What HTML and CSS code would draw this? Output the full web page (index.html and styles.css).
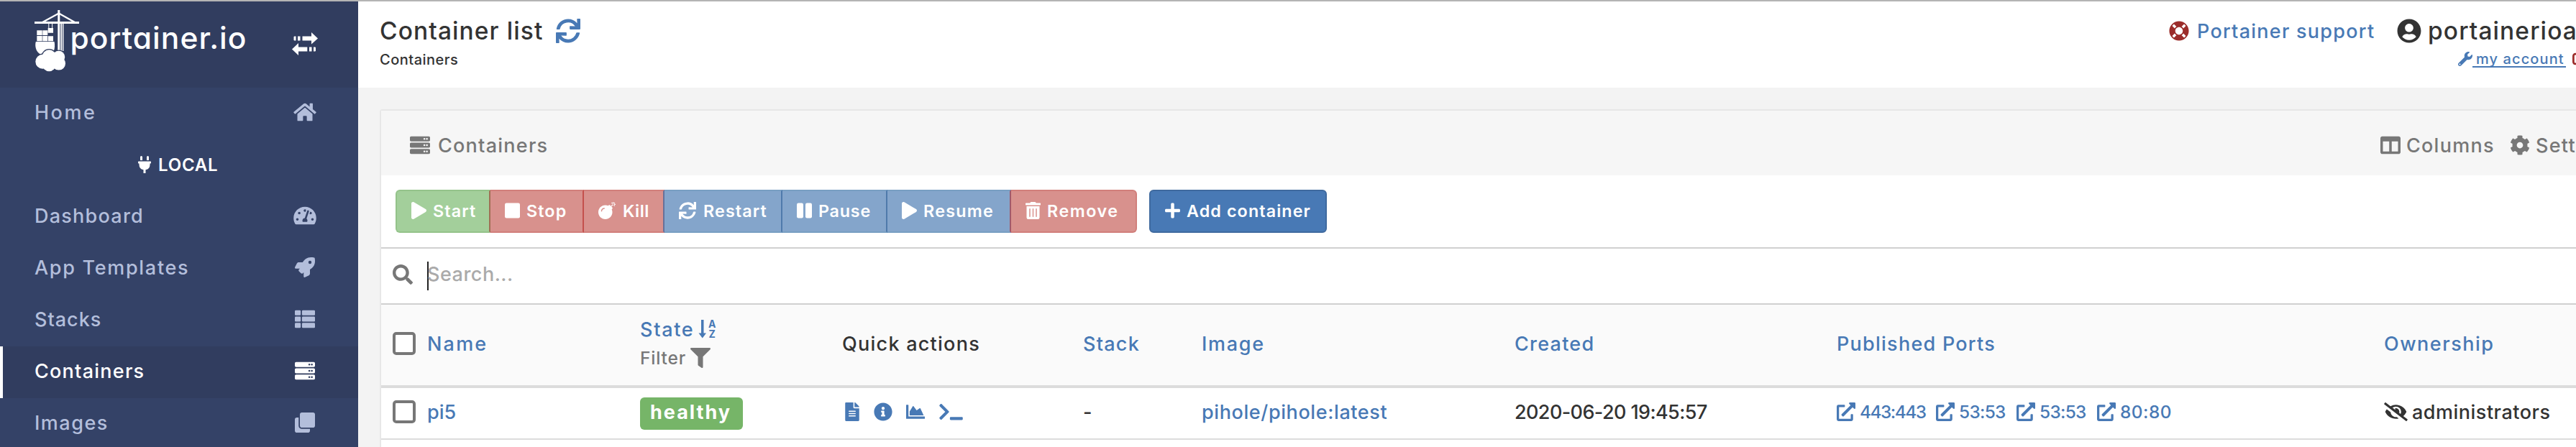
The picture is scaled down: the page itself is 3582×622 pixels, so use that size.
FILE: index.html
```html
<!DOCTYPE html>
<html lang="en">
<head>
<meta charset="utf-8">
<title>Portainer</title>
<link rel="stylesheet" href="styles.css">
</head>
<body>
<svg class="sprite" aria-hidden="true">
<symbol id="home" viewBox="0 0 576 512"><path d="M280.37 148.26L96 300.11V464a16 16 0 0 0 16 16l112.06-.29a16 16 0 0 0 15.92-16V368a16 16 0 0 1 16-16h64a16 16 0 0 1 16 16v95.64a16 16 0 0 0 16 16.05L464 480a16 16 0 0 0 16-16V300L295.67 148.26a12.19 12.19 0 0 0-15.3 0zM571.6 251.47L488 182.56V44.05a12 12 0 0 0-12-12h-56a12 12 0 0 0-12 12v72.61L318.47 43a48 48 0 0 0-61 0L4.34 251.47a12 12 0 0 0-1.6 16.9l25.5 31A12 12 0 0 0 45.15 301l235.22-193.74a12.19 12.19 0 0 1 15.3 0L530.9 301a12 12 0 0 0 16.9-1.6l25.5-31a12 12 0 0 0-1.7-16.93z"/></symbol>
<symbol id="plug" viewBox="0 0 384 512"><path d="M320,32a32,32,0,0,0-64,0v96h64Zm48,128H16A16,16,0,0,0,0,176v32a16,16,0,0,0,16,16H32v32A160.07,160.07,0,0,0,160,412.8V512h64V412.8A160.07,160.07,0,0,0,352,256V224h16a16,16,0,0,0,16-16V176A16,16,0,0,0,368,160ZM128,32a32,32,0,0,0-64,0v96h64Z"/></symbol>
<symbol id="tachometer" viewBox="0 0 576 512"><path d="M288 32C128.94 32 0 160.94 0 320c0 52.8 14.25 102.26 39.06 144.8 5.61 9.62 16.3 15.2 27.44 15.2h443c11.14 0 21.83-5.58 27.44-15.2C561.75 422.26 576 372.8 576 320c0-159.06-128.94-288-288-288zm0 64c14.71 0 26.58 10.13 30.32 23.65-1.11 2.26-2.64 4.23-3.45 6.67l-9.22 27.67c-5.13 3.49-10.97 6.01-17.64 6.01-17.67 0-32-14.33-32-32S270.33 96 288 96zM96 384c-17.67 0-32-14.33-32-32s14.33-32 32-32 32 14.33 32 32-14.33 32-32 32zm48-160c-17.67 0-32-14.33-32-32s14.33-32 32-32 32 14.33 32 32-14.33 32-32 32zm246.77-72.41l-61.33 184C343.13 347.33 352 364.54 352 384c0 11.72-3.38 22.55-8.88 32H232.88c-5.5-9.45-8.88-20.28-8.88-32 0-33.94 26.5-61.43 59.9-63.59l61.34-184.01c4.17-12.56 17.73-19.45 30.36-15.17 12.57 4.19 19.35 17.79 15.17 30.36zm14.66 57.2l15.52-46.55c3.47-1.29 7.13-2.23 11.05-2.23 17.67 0 32 14.33 32 32s-14.33 32-32 32c-11.38-.01-20.89-6.28-26.57-15.22zM480 384c-17.67 0-32-14.33-32-32s14.33-32 32-32 32 14.33 32 32-14.33 32-32 32z"/></symbol>
<symbol id="rocket" viewBox="0 0 512 512"><path d="M505.12 19.09c-1.19-5.53-6.66-11-12.21-12.19C460.72 0 435.51 0 410.41 0 307.18 0 245.27 55.2 199.05 128H94.84c-16.35.02-35.56 11.88-42.89 26.48L2.52 253.3A28.4 28.4 0 0 0 0 264a24 24 0 0 0 24 24h103.82l-22.48 22.47c-11.36 11.36-12.99 32.26 0 45.25l50.91 50.9c11.15 11.19 32.15 13.16 45.27 0L224 384.16V488a24 24 0 0 0 24 24 28.56 28.56 0 0 0 10.71-2.52l98.73-49.39c14.63-7.29 26.5-26.5 26.5-42.85V312.8C456.54 266.48 512 204.4 512 101.7c.08-25.2.08-50.4-6.88-82.61zM384.04 168A40 40 0 1 1 424.05 128 40.02 40.02 0 0 1 384.04 168z"/></symbol>
<symbol id="list" viewBox="0 0 512 512"><rect y="32" width="149.3" height="128" rx="24"/><rect y="192" width="149.3" height="128" rx="24"/><rect y="352" width="149.3" height="128" rx="24"/><rect x="181.3" y="32" width="330.7" height="128" rx="24"/><rect x="181.3" y="192" width="330.7" height="128" rx="24"/><rect x="181.3" y="352" width="330.7" height="128" rx="24"/></symbol>
<symbol id="server" viewBox="0 0 512 512"><path fill-rule="evenodd" d="M480 160H32c-17.7 0-32-14.3-32-32V64c0-17.7 14.3-32 32-32h448c17.7 0 32 14.3 32 32v64c0 17.7-14.3 32-32 32zm-48-88a24 24 0 1 0 0 48 24 24 0 0 0 0-48zm-64 0a24 24 0 1 0 0 48 24 24 0 0 0 0-48zM480 320H32c-17.7 0-32-14.3-32-32v-64c0-17.7 14.3-32 32-32h448c17.7 0 32 14.3 32 32v64c0 17.7-14.3 32-32 32zm-48-88a24 24 0 1 0 0 48 24 24 0 0 0 0-48zm-64 0a24 24 0 1 0 0 48 24 24 0 0 0 0-48zM480 480H32c-17.7 0-32-14.3-32-32v-64c0-17.7 14.3-32 32-32h448c17.7 0 32 14.3 32 32v64c0 17.7-14.3 32-32 32zm-48-88a24 24 0 1 0 0 48 24 24 0 0 0 0-48zm-64 0a24 24 0 1 0 0 48 24 24 0 0 0 0-48z"/></symbol>
<symbol id="clone" viewBox="0 0 512 512"><path d="M464 0c26.51 0 48 21.49 48 48v288c0 26.51-21.49 48-48 48H176c-26.51 0-48-21.49-48-48V48c0-26.51 21.49-48 48-48h288M176 416c-44.112 0-80-35.888-80-80V128H48c-26.51 0-48 21.49-48 48v288c0 26.51 21.49 48 48 48h288c26.51 0 48-21.49 48-48v-48H176z"/></symbol>
<symbol id="sync" viewBox="0 0 512 512"><path d="M440.65 12.57l4 82.77A247.16 247.16 0 0 0 255.83 8C134.73 8 33.91 94.92 12.29 209.82A12 12 0 0 0 24.09 224h49.05a12 12 0 0 0 11.67-9.26 175.91 175.91 0 0 1 317-56.94l-101.46-4.86a12 12 0 0 0-12.57 12v47.41a12 12 0 0 0 12 12H500a12 12 0 0 0 12-12V12a12 12 0 0 0-12-12h-47.37a12 12 0 0 0-11.98 12.57zM255.83 432a175.61 175.61 0 0 1-146-77.8l101.8 4.87a12 12 0 0 0 12.57-12v-47.4a12 12 0 0 0-12-12H12a12 12 0 0 0-12 12V500a12 12 0 0 0 12 12h47.35a12 12 0 0 0 12-12.6l-4.15-82.57A247.17 247.17 0 0 0 255.83 504c121.11 0 221.93-86.92 243.55-201.82a12 12 0 0 0-11.8-14.18h-49.05a12 12 0 0 0-11.67 9.26A175.86 175.86 0 0 1 255.83 432z"/></symbol>
<symbol id="ring" viewBox="0 0 512 512"><path d="M256 8C119.033 8 8 119.033 8 256s111.033 248 248 248 248-111.033 248-248S392.967 8 256 8zm173.696 119.559l-63.399 63.399c-10.987-18.559-26.67-34.252-45.255-45.255l63.399-63.399a218.396 218.396 0 0 1 45.255 45.255zM256 352c-53.019 0-96-42.981-96-96s42.981-96 96-96 96 42.981 96 96-42.981 96-96 96zM127.559 82.304l63.399 63.399c-18.559 10.987-34.252 26.67-45.255 45.255l-63.399-63.399a218.372 218.372 0 0 1 45.255-45.255zM82.304 384.441l63.399-63.399c10.987 18.559 26.67 34.252 45.255 45.255l-63.399 63.399a218.396 218.396 0 0 1-45.255-45.255zm302.137 45.255l-63.399-63.399c18.559-10.987 34.252-26.67 45.255-45.255l63.399 63.399a218.403 218.403 0 0 1-45.255 45.255z"/></symbol>
<symbol id="user" viewBox="0 0 496 512"><path d="M248 8C111 8 0 119 0 256s111 248 248 248 248-111 248-248S385 8 248 8zm0 96c48.6 0 88 39.4 88 88s-39.4 88-88 88-88-39.4-88-88 39.4-88 88-88zm0 344c-58.7 0-111.3-26.6-146.5-68.2 18.8-35.4 55.6-59.8 98.5-59.8 2.4 0 4.8.4 7.1 1.1 13 4.2 26.6 6.9 40.9 6.9 14.3 0 28-2.7 40.9-6.9 2.3-.7 4.7-1.1 7.1-1.1 42.9 0 79.7 24.4 98.5 59.8C359.3 421.4 306.7 448 248 448z"/></symbol>
<symbol id="wrench" viewBox="0 0 512 512"><path d="M507.73 109.1c-2.24-9.03-13.54-12.09-20.12-5.51l-74.36 74.36-67.88-11.31-11.31-67.88 74.36-74.36c6.62-6.62 3.43-17.9-5.66-20.16-47.38-11.74-99.55.91-136.58 37.93-39.64 39.64-50.55 97.1-34.05 147.2L18.74 402.76c-24.99 24.99-24.99 65.51 0 90.5 24.99 24.99 65.51 24.99 90.5 0l213.21-213.21c50.12 16.71 107.47 5.68 147.37-34.22 37.07-37.07 49.7-89.32 37.91-136.73zM64 472c-13.25 0-24-10.75-24-24 0-13.26 10.75-24 24-24s24 10.74 24 24c0 13.25-10.75 24-24 24z"/></symbol>
<symbol id="signout" viewBox="0 0 512 512"><path d="M180 448H96c-53 0-96-43-96-96V160c0-53 43-96 96-96h84c6.6 0 12 5.4 12 12v40c0 6.6-5.4 12-12 12H96c-17.7 0-32 14.3-32 32v192c0 17.7 14.3 32 32 32h84c6.6 0 12 5.4 12 12v40c0 6.6-5.4 12-12 12z"/></symbol>
<symbol id="columns" viewBox="0 0 512 512"><path d="M464 32H48C21.49 32 0 53.49 0 80v352c0 26.51 21.49 48 48 48h416c26.51 0 48-21.49 48-48V80c0-26.51-21.49-48-48-48zM224 416H64V160h160v256zm224 0H288V160h160v256z"/></symbol>
<symbol id="cog" viewBox="0 0 512 512"><path d="M487.4 315.7l-42.6-24.6c4.3-23.2 4.3-47 0-70.2l42.6-24.6c4.9-2.8 7.1-8.6 5.5-14-11.1-35.6-30-67.8-54.7-94.6-3.8-4.1-10-5.1-14.8-2.3L380.8 110c-17.9-15.4-38.5-27.3-60.8-35.1V25.8c0-5.6-3.9-10.5-9.4-11.7-36.7-8.2-74.3-7.8-109.2 0-5.5 1.2-9.4 6.1-9.4 11.7V75c-22.2 7.9-42.8 19.8-60.8 35.1L88.7 85.5c-4.9-2.8-11-1.9-14.8 2.3-24.7 26.7-43.6 58.9-54.7 94.6-1.7 5.4.6 11.2 5.5 14L67.3 221c-4.3 23.2-4.3 47 0 70.2l-42.6 24.6c-4.9 2.8-7.1 8.6-5.5 14 11.1 35.6 30 67.8 54.7 94.6 3.8 4.1 10 5.1 14.8 2.3l42.6-24.6c17.9 15.4 38.5 27.3 60.8 35.1v49.2c0 5.6 3.9 10.5 9.4 11.7 36.7 8.2 74.3 7.8 109.2 0 5.5-1.2 9.4-6.1 9.4-11.7v-49.2c22.2-7.9 42.8-19.8 60.8-35.1l42.6 24.6c4.9 2.8 11 1.9 14.8-2.3 24.7-26.7 43.6-58.9 54.7-94.6 1.5-5.5-.7-11.3-5.6-14.1zM256 336c-44.1 0-80-35.9-80-80s35.9-80 80-80 80 35.9 80 80-35.9 80-80 80z"/></symbol>
<symbol id="play" viewBox="0 0 448 512"><path d="M424.4 214.7L72.4 6.6C43.8-10.3 0 6.1 0 47.9V464c0 37.5 40.7 60.1 72.4 41.3l352-208c31.4-18.5 31.5-64.1 0-82.6z"/></symbol>
<symbol id="stop" viewBox="0 0 448 512"><rect y="32" width="448" height="448" rx="48"/></symbol>
<symbol id="bomb" viewBox="0 0 512 512"><path d="M440.5 88.5l-52 52L415 167c9.4 9.4 9.4 24.6 0 33.9l-17.4 17.4c11.8 26.1 18.4 55.1 18.4 85.6 0 114.9-93.1 208-208 208S0 418.9 0 304 93.1 96 208 96c30.5 0 59.5 6.6 85.6 18.4L311 97c9.4-9.4 24.6-9.4 33.9 0l26.5 26.5 52-52 17.1 17zM500 60h-24c-6.6 0-12 5.4-12 12s5.4 12 12 12h24c6.6 0 12-5.4 12-12s-5.4-12-12-12zM440 0c-6.6 0-12 5.4-12 12v24c0 6.6 5.4 12 12 12s12-5.4 12-12V12c0-6.6-5.4-12-12-12zm33.9 55l17-17c4.7-4.7 4.7-12.3 0-17-4.7-4.7-12.3-4.7-17 0l-17 17c-4.7 4.7-4.7 12.3 0 17 4.8 4.7 12.4 4.7 17 0zm-67.8 0c4.7 4.7 12.3 4.7 17 0 4.7-4.7 4.7-12.3 0-17l-17-17c-4.7-4.7-12.3-4.7-17 0-4.7 4.7-4.7 12.3 0 17l17 17zm67.8 34c-4.7-4.7-12.3-4.7-17 0-4.7 4.7-4.7 12.3 0 17l17 17c4.7 4.7 12.3 4.7 17 0 4.7-4.7 4.7-12.3 0-17l-17-17zM112 272c0-35.3 28.7-64 64-64 8.8 0 16-7.2 16-16s-7.2-16-16-16c-52.9 0-96 43.1-96 96 0 8.8 7.2 16 16 16s16-7.2 16-16z"/></symbol>
<symbol id="pause" viewBox="0 0 448 512"><rect y="31" width="192" height="448" rx="48"/><rect x="256" y="31" width="192" height="448" rx="48"/></symbol>
<symbol id="trash" viewBox="0 0 448 512"><path d="M32 464a48 48 0 0 0 48 48h288a48 48 0 0 0 48-48V128H32zm272-256a16 16 0 0 1 32 0v224a16 16 0 0 1-32 0zm-96 0a16 16 0 0 1 32 0v224a16 16 0 0 1-32 0zm-96 0a16 16 0 0 1 32 0v224a16 16 0 0 1-32 0zM432 32H312l-9.4-18.7A24 24 0 0 0 281.1 0H166.8a23.72 23.72 0 0 0-21.4 13.3L136 32H16A16 16 0 0 0 0 48v32a16 16 0 0 0 16 16h416a16 16 0 0 0 16-16V48a16 16 0 0 0-16-16z"/></symbol>
<symbol id="plus" viewBox="0 0 448 512"><path d="M416 208H272V64c0-17.67-14.33-32-32-32h-32c-17.67 0-32 14.33-32 32v144H32c-17.67 0-32 14.33-32 32v32c0 17.67 14.33 32 32 32h144v144c0 17.67 14.33 32 32 32h32c17.67 0 32-14.33 32-32V304h144c17.67 0 32-14.33 32-32v-32c0-17.67-14.33-32-32-32z"/></symbol>
<symbol id="search" viewBox="0 0 512 512"><path d="M505 442.7L405.3 343c-4.5-4.5-10.6-7-17-7H372c27.6-35.3 44-79.7 44-128C416 93.1 322.9 0 208 0S0 93.1 0 208s93.1 208 208 208c48.3 0 92.7-16.4 128-44v16.3c0 6.4 2.5 12.5 7 17l99.7 99.7c9.4 9.4 24.6 9.4 33.9 0l28.3-28.3c9.4-9.4 9.4-24.6.1-34zM208 336c-70.7 0-128-57.2-128-128 0-70.7 57.2-128 128-128 70.7 0 128 57.2 128 128 0 70.7-57.2 128-128 128z"/></symbol>
<symbol id="filter" viewBox="0 0 512 512"><path d="M487.976 0H24.028C2.71 0-8.047 25.866 7.058 40.971L192 225.941V432c0 7.831 3.821 15.17 10.237 19.662l80 55.98C298.02 518.69 320 507.493 320 487.98V225.941l184.947-184.97C520.021 25.896 509.338 0 487.976 0z"/></symbol>
<symbol id="file" viewBox="0 0 384 512"><path d="M224 136V0H24C10.7 0 0 10.7 0 24v464c0 13.3 10.7 24 24 24h336c13.3 0 24-10.7 24-24V160H248c-13.2 0-24-10.8-24-24zm64 236c0 6.6-5.4 12-12 12H108c-6.6 0-12-5.4-12-12v-8c0-6.6 5.4-12 12-12h168c6.6 0 12 5.4 12 12v8zm0-64c0 6.6-5.4 12-12 12H108c-6.6 0-12-5.4-12-12v-8c0-6.6 5.4-12 12-12h168c6.6 0 12 5.4 12 12v8zm0-72v8c0 6.6-5.4 12-12 12H108c-6.6 0-12-5.4-12-12v-8c0-6.6 5.4-12 12-12h168c6.6 0 12 5.4 12 12zm96-114.1v6.1H256V0h6.1c6.4 0 12.5 2.5 17 7l97.9 98c4.5 4.5 7 10.6 7 16.9z"/></symbol>
<symbol id="info" viewBox="0 0 512 512"><path d="M256 8C119.043 8 8 119.083 8 256c0 136.997 111.043 248 248 248s248-111.003 248-248C504 119.083 392.957 8 256 8zm0 110c23.196 0 42 18.804 42 42s-18.804 42-42 42-42-18.804-42-42 18.804-42 42-42zm56 254c0 6.627-5.373 12-12 12h-88c-6.627 0-12-5.373-12-12v-24c0-6.627 5.373-12 12-12h12v-64h-12c-6.627 0-12-5.373-12-12v-24c0-6.627 5.373-12 12-12h64c6.627 0 12 5.373 12 12v100h12c6.627 0 12 5.373 12 12v24z"/></symbol>
<symbol id="chart" viewBox="0 0 512 512"><path d="M500 384c6.6 0 12 5.4 12 12v40c0 6.6-5.4 12-12 12H12c-6.6 0-12-5.4-12-12V76c0-6.6 5.4-12 12-12h40c6.6 0 12 5.4 12 12v308h436zM372.7 159.5L288 216l-85.3-113.7c-5.1-6.8-15.5-6.3-19.9 1L96 248v104h384l-89.9-187.8c-3.2-6.5-11.4-8.7-17.4-4.7z"/></symbol>
<symbol id="terminal" viewBox="0 0 640 512"><path d="M257.981 272.971L63.638 467.314c-9.373 9.373-24.569 9.373-33.941 0L7.029 444.647c-9.357-9.357-9.375-24.522-.04-33.901L161.011 256 6.99 101.255c-9.335-9.379-9.317-24.544.04-33.901l22.667-22.667c9.373-9.373 24.569-9.373 33.941 0L257.981 239.03c9.373 9.372 9.373 24.568 0 33.941zM640 456v-32c0-13.255-10.745-24-24-24H312c-13.255 0-24 10.745-24 24v32c0 13.255 10.745 24 24 24h304c13.255 0 24-10.745 24-24z"/></symbol>
<symbol id="external" viewBox="0 0 512 512"><path d="M432,320H400a16,16,0,0,0-16,16V448H64V128H208a16,16,0,0,0,16-16V80a16,16,0,0,0-16-16H48A48,48,0,0,0,0,112V464a48,48,0,0,0,48,48H400a48,48,0,0,0,48-48V336A16,16,0,0,0,432,320ZM488,0h-128c-21.37,0-32.05,25.91-17,41l35.73,35.73L135,320.37a24,24,0,0,0,0,34L157.67,377a24,24,0,0,0,34,0L435.28,133.32,471,169c15,15,41,4.5,41-17V24A24,24,0,0,0,488,0Z"/></symbol>
<symbol id="eye" viewBox="0 0 640 512"><path d="M320 400c-75.85 0-137.25-58.71-142.9-133.11L72.2 185.82c-13.79 17.3-26.48 35.59-36.72 55.59a32.35 32.35 0 0 0 0 29.19C89.71 376.41 197.07 448 320 448c26.91 0 52.87-4 77.89-10.46L346 397.39a144.13 144.13 0 0 1-26 2.61zm313.82 58.1l-110.55-85.44a331.25 331.25 0 0 0 81.25-102.07 32.35 32.35 0 0 0 0-29.19C550.29 135.59 442.93 64 320 64a308.15 308.15 0 0 0-147.32 37.7L45.46 3.37A16 16 0 0 0 23 6.18L3.37 31.45A16 16 0 0 0 6.18 53.9l588.36 454.73a16 16 0 0 0 22.46-2.81l19.64-25.27a16 16 0 0 0-2.82-22.45zm-183.72-142l-39.3-30.38A94.75 94.75 0 0 0 416 256a94.76 94.76 0 0 0-121.31-92.21A47.65 47.65 0 0 1 304 192a46.64 46.64 0 0 1-1.54 10l-73.61-56.89A142.31 142.31 0 0 1 320 112a143.92 143.92 0 0 1 144 144c0 21.63-5.29 41.79-13.9 60.11z"/></symbol>
</svg>
<div class="app">
<nav class="sidebar">
  <div class="brand">
    <svg class="logo" viewBox="0 0 300 87">
      <path d="M1 17h62v3H1z"/>
      <path d="M33.300 1h3v58h-3zM37.300 19h1.700v39h-1.700zM39.900 19h1.500v39h-1.500z"/>
      <path class="boom" d="M12 18L34.800 5.500 57 18"/>
      <path class="hook" d="M20.800 20v6M25.600 20v6"/>
      <path d="M19.700 26H27v6.700h-7.300zM4.300 29.300h7.400V36H4.300zM12.300 29.300h7V36h-7zM4.300 36.900h7.400v7.300H4.300zM12.300 36.900h7v7.300h-7zM20 37.300h7v6.900h-7z"/>
      <path d="M2.800 45H28.500c1 4 .8 10-1 13.500l-18 4.200C2 59 1.500 50 2.800 45z"/>
      <g class="halo"><circle cx="12.300" cy="72.700" r="10"/><circle cx="21.300" cy="66" r="9.700"/><circle cx="34.700" cy="66.300" r="8.500"/></g>
      <circle cx="12.300" cy="72.700" r="10"/><circle cx="21.300" cy="66" r="9.700"/><circle cx="34.700" cy="66.300" r="8.500"/><circle cx="34.700" cy="75.300" r="9.300"/><circle cx="21.300" cy="77" r="9.300"/>
      <text class="wordmark" x="50.500" y="55" textLength="245">portainer.io</text>
    </svg>
    <svg class="toggle" viewBox="0 0 36 32"><path d="M3.500 5.500h2v6h-2c-1 0-1-1-1-1v-4s0-1 1-1zM8 5.500h3.500v6H8zM14.500 5.500H27V0l9 8.500-9 8v-5H14.500zM21.300 20.500v6H9V32l-9-8.500L9 15v5.500zM24 20.500h3.500v6H24zM30 20.500h2c1 0 1 1 1 1v4s0 1-1 1h-2z"/></svg>
  </div>
  <a class="item"><span class="t k25">Home</span><svg><use href="#home"/></svg></a>
  <div class="endpoint"><svg><use href="#plug"/></svg><span class="t k08">LOCAL</span></div>
  <a class="item"><span class="t k13">Dashboard</span><svg><use href="#tachometer"/></svg></a>
  <a class="item"><span class="t k17">App Templates</span><svg><use href="#rocket"/></svg></a>
  <a class="item"><span class="t k10">Stacks</span><svg><use href="#list"/></svg></a>
  <a class="item active"><span class="t k13">Containers</span><svg><use href="#server"/></svg></a>
  <a class="item"><span class="t k15">Images</span><svg><use href="#clone"/></svg></a>
</nav>
<main class="main">
  <header class="top">
    <div>
      <h1 class="title"><span class="t k11">Container list</span><svg><use href="#sync"/></svg></h1>
      <div class="crumb"><span class="t k05">Containers</span></div>
    </div>
    <div class="account">
      <div class="who"><svg class="ring"><use href="#ring"/></svg><span class="t support k13">Portainer support</span><svg class="avatar"><use href="#user"/></svg><span class="t user k11">portainerioa</span></div>
      <div class="links"><svg class="wrench"><use href="#wrench"/></svg><span class="t my k11">my account</span><svg class="signout"><use href="#signout"/></svg></div>
    </div>
  </header>
  <section class="panel">
    <div class="panel-head"><svg><use href="#server"/></svg><span class="t k13">Containers</span>
      <div class="tools"><svg><use href="#columns"/></svg><span class="t cols k13">Columns</span><svg><use href="#cog"/></svg><span class="t k13">Sett</span></div>
    </div>
    <div class="toolbar">
      <div class="group">
        <button class="btn green b1"><svg><use href="#play"/></svg><span class="t k11">Start</span></button>
        <button class="btn red b2"><svg><use href="#stop"/></svg><span class="t k11">Stop</span></button>
        <button class="btn red b3"><svg class="sq"><use href="#bomb"/></svg><span class="t k05">Kill</span></button>
        <button class="btn blue b4"><svg class="sq"><use href="#sync"/></svg><span class="t k11">Restart</span></button>
        <button class="btn blue b5"><svg><use href="#pause"/></svg><span class="t k08">Pause</span></button>
        <button class="btn blue b6"><svg><use href="#play"/></svg><span class="t k13">Resume</span></button>
        <button class="btn red b7"><svg><use href="#trash"/></svg><span class="t k15">Remove</span></button>
      </div>
      <button class="btn add"><svg><use href="#plus"/></svg><span class="t k11">Add container</span></button>
    </div>
    <div class="search"><svg><use href="#search"/></svg><i class="caret"></i><span class="t k05">Search...</span></div>
    <div class="row thead">
      <div class="cell"><i class="check"></i><span class="t link k22">Name</span></div>
      <div class="state"><div class="sort"><span class="t link k17">State</span><svg class="az" viewBox="0 0 26 26"><path d="M4 0h3.500v18.500H11L5.750 25.500.500 18.500H4z"/><text x="14" y="10.500">A</text><text x="14.500" y="25.300">Z</text></svg></div><div class="filter"><span class="t k08">Filter</span><svg><use href="#filter"/></svg></div></div>
      <div><span class="t k13">Quick actions</span></div>
      <div><span class="t link k13">Stack</span></div>
      <div><span class="t link k17">Image</span></div>
      <div><span class="t link k13">Created</span></div>
      <div><span class="t link k13">Published Ports</span></div>
      <div><span class="t link k15">Ownership</span></div>
    </div>
    <div class="row body">
      <div class="cell"><i class="check"></i><span class="t link">pi5</span></div>
      <div><span class="badge"><span class="t k20">healthy</span></span></div>
      <div class="actions"><svg class="a1"><use href="#file"/></svg><svg class="a2"><use href="#info"/></svg><svg class="a3"><use href="#chart"/></svg><svg class="a4"><use href="#terminal"/></svg></div>
      <div><span class="t">-</span></div>
      <div><span class="t link k06">pihole/pihole:latest</span></div>
      <div><span class="t date">2020-06-20 19:45:57</span></div>
      <div class="ports"><a class="p1"><svg><use href="#external"/></svg><span class="t long">443:443</span></a><a><svg><use href="#external"/></svg><span class="t short">53:53</span></a><a><svg><use href="#external"/></svg><span class="t short">53:53</span></a><a><svg><use href="#external"/></svg><span class="t k05">80:80</span></a></div>
      <div class="owner"><svg><use href="#eye"/></svg><span class="t k05">administrators</span></div>
    </div>
  </section>
</main>
</div>
</body>
</html>
```
FILE: styles.css
```css
* { box-sizing: border-box; }
body {
  margin: 0;
  width: 3582px;
  height: 622px;
  overflow: hidden;
  font-family: Inter, "Open Sans", sans-serif;
  font-weight: 500;
  font-size: 27px;
  color: #333;
  background: #f3f3f3;
}
svg { fill: currentColor; flex: none; display: block; }
.sprite { display: none; }
.t { white-space: nowrap; flex: none; }

/* letter tracking */
.k05 { letter-spacing: .5px; }
.k06 { letter-spacing: .6px; }
.k08 { letter-spacing: .8px; }
.k10 { letter-spacing: 1px; }
.k11 { letter-spacing: 1.1px; }
.k13 { letter-spacing: 1.25px; }
.k15 { letter-spacing: 1.5px; }
.k17 { letter-spacing: 1.7px; }
.k20 { letter-spacing: 2px; }
.k22 { letter-spacing: 2.2px; }
.k25 { letter-spacing: 2.5px; }

.app { display: flex; height: 622px; border-top: 2px solid #b4b4b4; overflow: hidden; }

.sidebar { width: 498px; flex: none; background: #344267; color: #b3bedb; }
.brand { height: 120px; background: #313d5f; color: #fff; padding: 11px 56px 0 47px; display: flex; justify-content: space-between; }
.logo { width: 300px; height: 87px; overflow: visible; }
.boom { fill: none; stroke: currentColor; stroke-width: 2.4; }
.hook { fill: none; stroke: currentColor; }
.halo { stroke: #313d5f; stroke-width: 2.4; }
.wordmark { font: 450 42.5px Inter, sans-serif; font-feature-settings: "cv11"; }
.toggle { width: 36px; height: 32px; margin-top: 32px; }
.item { height: 72px; padding: 0 56px 4px 48px; display: flex; align-items: center; justify-content: space-between; }
.item svg { width: 36px; height: 28px; }
.item.active { background: #313d5f; color: #fff; border-left: 4px solid #fff; padding-left: 44px; }
.endpoint { height: 72px; display: flex; align-items: center; padding: 0 0 2px 192px; color: #fff; font-size: 24px; font-weight: 600; }
.endpoint svg { width: 18px; height: 24px; margin-right: 10px; }

.main { flex: 1; min-width: 0; }
.top { height: 120px; background: #fff; display: flex; justify-content: space-between; padding-left: 30px; }
.title { margin: 21px 0 0; height: 40px; font-size: 33.5px; font-weight: 500; display: flex; align-items: center; }
.title svg { width: 34px; height: 34px; color: #4879b5; margin-left: 18px; }
.crumb { font-size: 20px; line-height: 30px; margin-top: 5px; }
.account { width: 566px; overflow: hidden; }
.who { height: 40px; margin-top: 21px; display: flex; align-items: center; }
.ring { width: 28px; height: 28px; color: #9b2c2a; }
.support { color: #4879b5; margin-left: 11px; width: 250px; }
.avatar { width: 34px; height: 34px; margin-left: 28px; }
.user { font-size: 33.5px; margin-left: 9px; }
.links { height: 30px; display: flex; align-items: center; padding-left: 402px; font-size: 20px; margin-top: 4px; color: #4879b5; }
.wrench { width: 20px; height: 20px; }
.my { width: 130px; height: 24px; padding: 2px 0 0 5px; border-bottom: 2px solid #4879b5; line-height: 20px; }
.signout { width: 22px; height: 22px; margin-left: 9px; color: #9b2c2a; }

.panel { margin: 30px 0 0 30px; border: 2px solid #e7e7e7; border-right: 0; border-radius: 4px 0 0 0; background: #fff; height: 500px; }
.panel-head { height: 90px; background: #f6f6f6; color: #777; display: flex; align-items: center; padding: 6px 0 0 40px; }
.panel-head svg { width: 28px; height: 28px; margin-right: 11px; }
.tools { margin-left: auto; display: flex; align-items: center; width: 272px; }
.tools svg { margin-right: 8px; }
.cols { width: 144px; }
.toolbar { height: 102px; border-bottom: 2px solid #d0d0d0; display: flex; padding: 20px; gap: 17px; }
.group { display: flex; }
.btn { height: 60px; margin: 0; font: 600 23.3px Inter, sans-serif; color: #fff; border: 2px solid; display: flex; align-items: center; padding: 0 0 2px 20px; }
.btn svg { width: 21px; height: 24px; margin-right: 9px; }
.btn svg.sq { width: 24px; margin-right: 10px; }
.green { background: #a3cf9b; border-color: #94c38a; }
.red { background: #d8918d; border-color: #d17f7b; }
.blue { background: #84a5cb; border-color: #789ec2; }
.b1 { width: 132px; border-radius: 6px 0 0 6px; border-right-color: #a07055; }
.b2 { width: 130px; border-left: 0; border-right-color: #c4504c; }
.b3 { width: 112px; border-left: 0; border-right-color: #67719a; }
.b4 { width: 164px; border-left: 0; border-right-color: #4f7aab; }
.b5 { width: 146px; border-left: 0; border-right-color: #4f7aab; }
.b6 { width: 172px; border-left: 0; border-right-color: #a2596a; }
.b7 { width: 175px; border-left: 0; border-radius: 0 6px 6px 0; }
.add { width: 247px; background: #4879b5; border-color: #3f6a9f; border-radius: 6px; }
.search { height: 78px; border-bottom: 2px solid #d0d0d0; display: flex; align-items: center; padding: 0 0 5px 16px; color: #aaa; }
.search svg { width: 28px; height: 28px; color: #777; }
.caret { width: 2px; height: 40px; background: #222; margin: 5px -2px 0 20px; }

.row { display: grid; grid-template-columns: 360px 281px 335px 165px 435px 448px 761px 267px; align-items: center; }
.thead { height: 116px; background: #fafafa; border-bottom: 4px solid #dcdcdc; padding-bottom: 4px; }
.body { height: 72px; border-bottom: 2px solid #dcdcdc; padding-bottom: 4px; }
.cell { display: flex; align-items: center; padding-left: 14px; }
.check { width: 32px; height: 32px; border: 4px solid #777; border-radius: 5px; margin: 0 16px 0 2px; background: #fff; }
.link { color: #4879b5; }
.sort { display: flex; align-items: center; height: 40px; color: #4879b5; }
.az { width: 26px; height: 26px; margin-left: 6px; overflow: visible; }
.az text { font: 700 14px Inter, sans-serif; }
.filter { display: flex; align-items: center; height: 40px; color: #777; font-size: 24.5px; font-weight: 500; }
.filter svg { width: 28px; height: 28px; margin-left: 6px; }
.badge { display: flex; align-items: center; width: 143px; height: 45px; padding: 0 0 4px 14px; background: #76b568; color: #fff; border-radius: 6px; font-weight: 700; margin-top: 4px; }
.actions { display: flex; align-items: center; color: #4879b5; }
.a1 { width: 20px; height: 26px; margin-left: 4px; }
.a2 { width: 26px; height: 26px; margin-left: 20px; }
.a3 { width: 26px; height: 26px; margin-left: 19px; }
.a4 { width: 33px; height: 26px; margin-left: 20px; }
.date { letter-spacing: -.6px; }
.ports { display: flex; color: #4879b5; font-size: 24.4px; }
.ports a { display: flex; align-items: center; width: 112px; }
.ports a.p1 { width: 138px; }
.ports svg { width: 26px; height: 26px; margin-right: 6px; }
.long { letter-spacing: -1.5px; }
.short { letter-spacing: -.7px; }
.owner { display: flex; align-items: center; }
.owner svg { width: 33px; height: 26px; margin-right: 6px; }
```
